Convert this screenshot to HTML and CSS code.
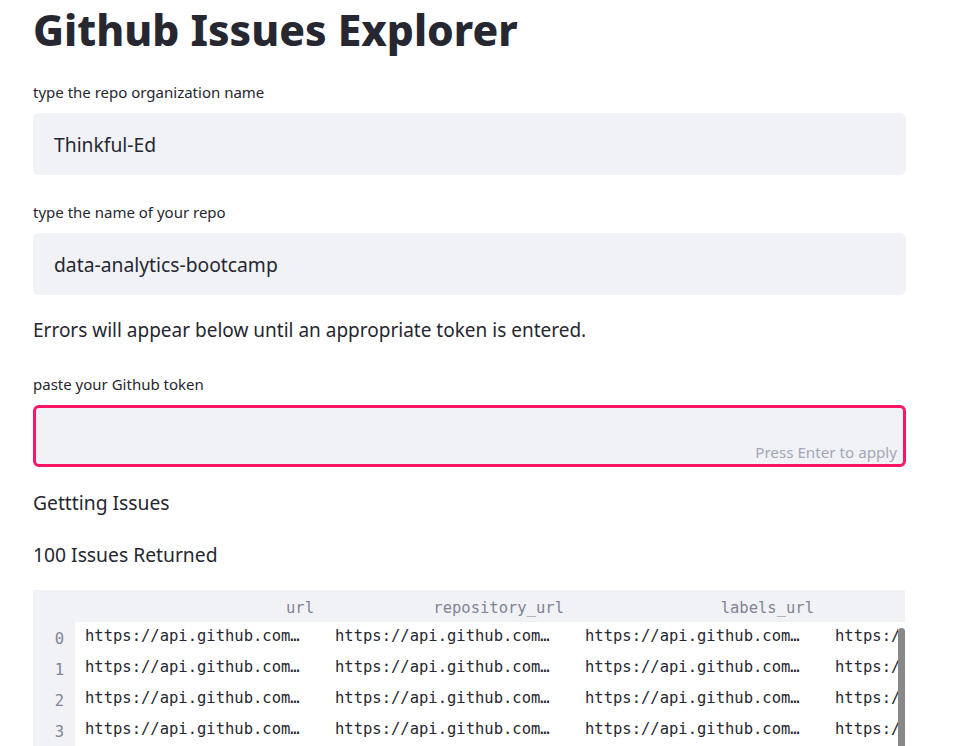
FILE: index.html
```html
<!DOCTYPE html>
<html>
<head>
<meta charset="utf-8">
<link rel="stylesheet" href="styles.css">
</head>
<body>
<main class="main">
  <h1 class="title">Github Issues Explorer</h1>

  <label class="label">type the repo organization name</label>
  <div class="input"><span class="value">Thinkful-Ed</span></div>

  <label class="label label-gap">type the name of your repo</label>
  <div class="input"><span class="value">data-analytics-bootcamp</span></div>

  <p class="text text-errors">Errors will appear below until an appropriate token is entered.</p>

  <label class="label label-token">paste your Github token</label>
  <div class="input input-focus"><span class="hint">Press Enter to apply</span></div>

  <p class="text text-getting">Gettting Issues</p>
  <p class="text text-returned">100 Issues Returned</p>

  <div class="table">
    <div class="row head">
      <div class="idx"></div>
      <div class="cell">url</div>
      <div class="cell">repository_url</div>
      <div class="cell">labels_url</div>
      <div class="cell"></div>
    </div>
    <div class="row"><div class="idx">0</div><div class="cell">https://api.github.com…</div><div class="cell">https://api.github.com…</div><div class="cell">https://api.github.com…</div><div class="cell cell-last">https://api.github.com…</div></div>
    <div class="row"><div class="idx">1</div><div class="cell">https://api.github.com…</div><div class="cell">https://api.github.com…</div><div class="cell">https://api.github.com…</div><div class="cell cell-last">https://api.github.com…</div></div>
    <div class="row"><div class="idx">2</div><div class="cell">https://api.github.com…</div><div class="cell">https://api.github.com…</div><div class="cell">https://api.github.com…</div><div class="cell cell-last">https://api.github.com…</div></div>
    <div class="row"><div class="idx">3</div><div class="cell">https://api.github.com…</div><div class="cell">https://api.github.com…</div><div class="cell">https://api.github.com…</div><div class="cell cell-last">https://api.github.com…</div></div>
    <div class="scrollbar"></div>
  </div>
</main>
</body>
</html>
```
FILE: styles.css
```css
html, body {
  margin: 0;
  padding: 0;
  background: #ffffff;
}
body {
  font-family: "Noto Sans", "Open Sans", sans-serif;
  color: #262730;
  height: 746px;
  overflow: hidden;
}
.main {
  width: 873px;
  padding-left: 33px;
  display: flex;
  flex-direction: column;
}
.title {
  margin: 0;
  padding-top: 0;
  font-size: 42.5px;
  line-height: 59px;
  height: 59px;
  font-weight: 800;
  letter-spacing: 0;
  color: #262730;
}
.label {
  display: block;
  margin-top: 21px;
  font-size: 15px;
  line-height: 24px;
  height: 24px;
  margin-bottom: 9px;
}
.label-gap { margin-top: 25px; }
.label-token { margin-top: 28px; }
.input {
  box-sizing: border-box;
  height: 62px;
  background: #f0f2f6;
  border-radius: 6px;
  padding: 0 21px;
  display: flex;
  align-items: center;
  position: relative;
}
.value {
  font-size: 19.3px;
}
.input-focus {
  border: 3px solid #ff1466;
  border-radius: 6px;
}
.hint {
  position: absolute;
  right: 6px;
  bottom: 2px;
  font-size: 15.2px;
  color: #a3a8b8;
}
.text {
  margin: 0;
  font-size: 19.3px;
  line-height: 28px;
}
.text-errors {
  margin-top: 21px;
  font-size: 19px;
}
.text-getting { margin-top: 22px; }
.text-returned { margin-top: 24px; }
.table {
  margin-top: 21px;
  position: relative;
  overflow: hidden;
  width: 872px;
  height: 160px;
  font-family: "DejaVu Sans Mono", "Liberation Mono", monospace;
  font-size: 15.5px;
  color: #262730;
  background: linear-gradient(to right, #f0f2f6 42px, transparent 42px);
}
.row {
  display: flex;
  height: 31px;
  align-items: center;
  white-space: nowrap;
  box-sizing: border-box;
  padding-bottom: 4px;
}
.head {
  height: 32px;
  padding-bottom: 0;
  padding-top: 4px;
  background: #f0f2f6;
  color: #808495;
}
.head .cell {
  text-align: right;
  padding-right: 11px;
}
.idx {
  flex: 0 0 42px;
  box-sizing: border-box;
  text-align: right;
  padding-right: 11px;
  color: #808495;
  position: relative;
  top: 3px;
}
.cell {
  flex: 0 0 250px;
  box-sizing: border-box;
  padding-left: 10px;
  overflow: hidden;
}
.cell-last {
  flex: 0 0 73px;
  text-overflow: clip;
}
.scrollbar {
  position: absolute;
  right: 0;
  top: 38px;
  width: 7px;
  height: 140px;
  background: #888888;
  border-radius: 4px 4px 0 0;
}
```
